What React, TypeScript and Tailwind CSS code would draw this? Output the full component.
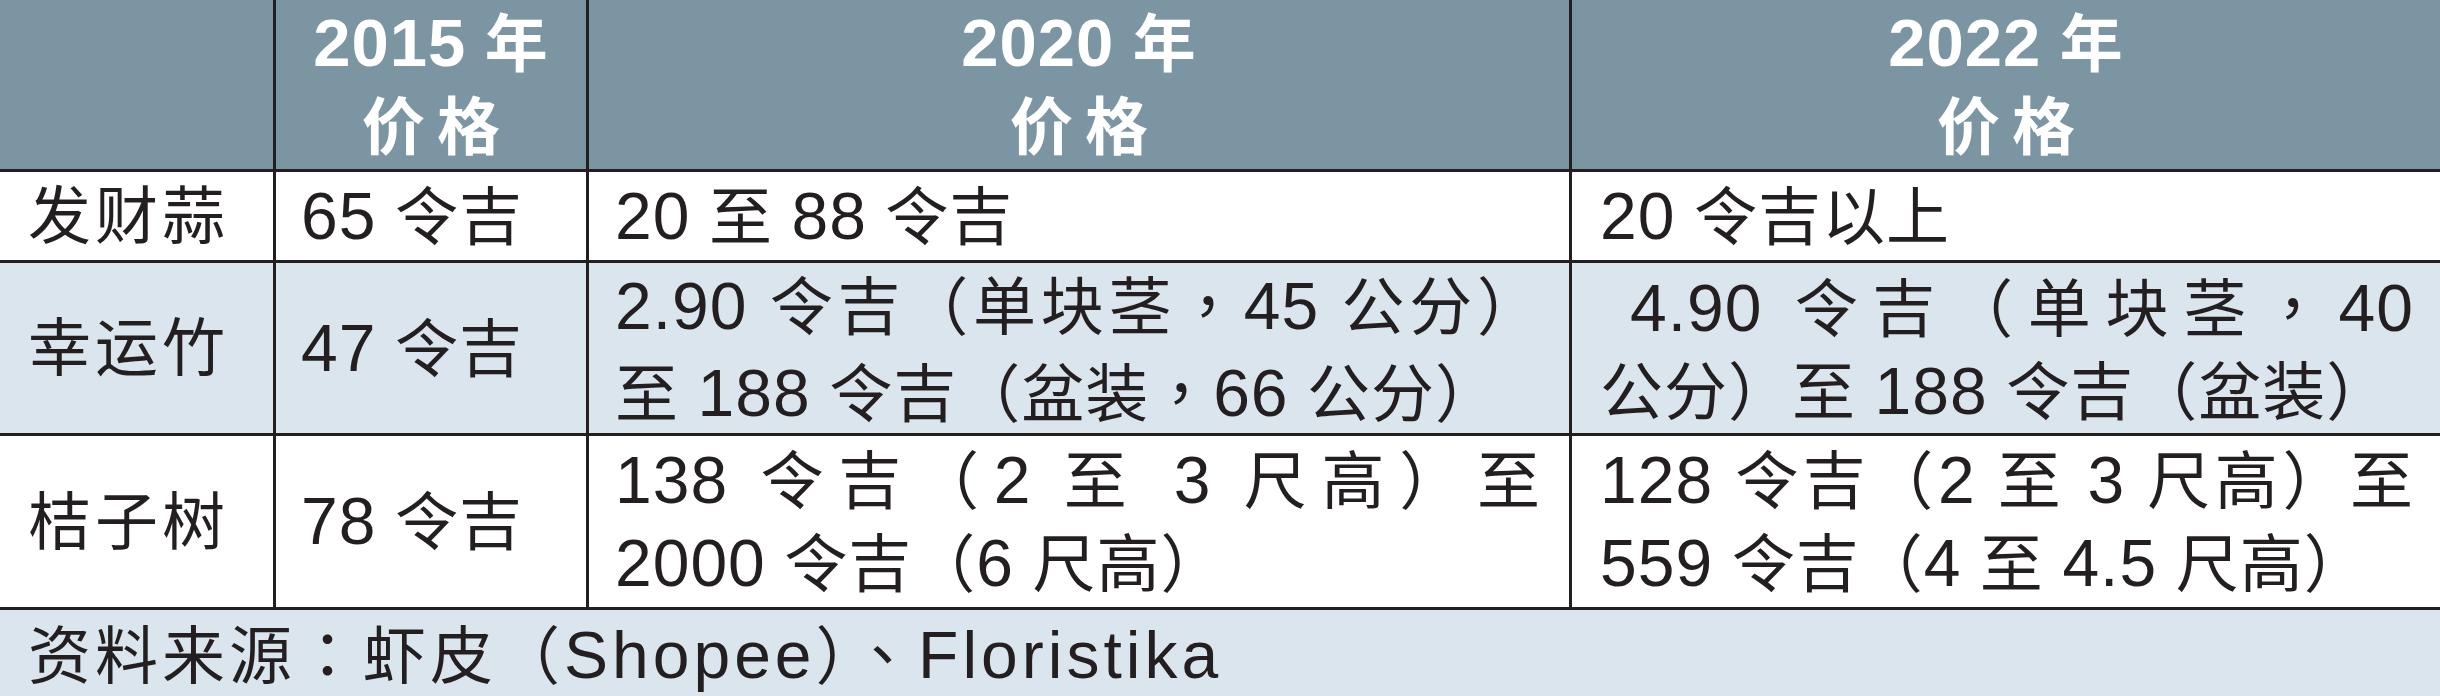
const rows = [
  {
    name: '发财蒜',
    p2015: '65 令吉',
    p2020: [{ text: '20 至 88 令吉' }],
    p2022: [{ text: '20 令吉以上' }],
    bg: 'bg-white',
  },
  {
    name: '幸运竹',
    p2015: '47 令吉',
    p2020: [
      { text: '2.90 令吉（单块茎，45 公分）', justify: true },
      { text: '至 188 令吉（盆装，66 公分）' },
    ],
    p2022: [
      { text: '4.90 令吉（单块茎，40', justify: true, indent: true },
      { text: '公分）至 188 令吉（盆装）' },
    ],
    bg: 'bg-[#dbe5ed]',
  },
  {
    name: '桔子树',
    p2015: '78 令吉',
    p2020: [
      { text: '138 令吉（2 至 3 尺高）至', justify: true },
      { text: '2000 令吉（6 尺高）' },
    ],
    p2022: [
      { text: '128 令吉（2 至 3 尺高）至', justify: true },
      { text: '559 令吉（4 至 4.5 尺高）' },
    ],
    bg: 'bg-white',
  },
];

type Line = { text: string; justify?: boolean; indent?: boolean };

// latin runs are set a little larger than the CJK, centred punctuation uses the TC face
function Runs({ text }: { text: string }) {
  const parts = text.split(/([A-Za-z0-9.]+|[：，、])/).filter((p) => p !== '');
  return (
    <>
      {parts.map((p, i) => {
        if (/^[A-Za-z0-9.]+$/.test(p)) {
          return (
            <span key={i} className="text-[66px]">
              {p}
            </span>
          );
        }
        if (/^[：，、]$/.test(p)) {
          return (
            <span key={i} lang="zh-TW" className="font-['Noto_Sans_CJK_TC',sans-serif]">
              {p}
            </span>
          );
        }
        return <span key={i}>{p}</span>;
      })}
    </>
  );
}

function Lines({ lines }: { lines: Line[] }) {
  return (
    <>
      {lines.map((l, i) => (
        <div
          key={i}
          className={
            l.justify
              ? `text-justify [text-align-last:justify] ${l.indent ? 'pl-[30px]' : ''}`
              : ''
          }
        >
          <Runs text={l.text} />
        </div>
      ))}
    </>
  );
}

function Head({ year }: { year: string }) {
  return (
    <>
      <div>
        <span className="text-[67px]">{year}</span> 年
      </div>
      <div className="tracking-[12px] pl-[12px]">价格</div>
    </>
  );
}

export default function App() {
  const cell = 'flex flex-col justify-center border-[#231f20]';
  const head = `${cell} bg-[#7b95a2] border-b-[3px] text-white font-bold text-[63px] leading-[83px] text-center`;

  return (
    <div
      lang="zh-CN"
      className="w-[2440px] h-[696px] bg-white text-[#231f20] font-['Liberation_Sans','Noto_Sans_CJK_SC',sans-serif] text-[63px] leading-[82px] tracking-[1px]"
    >
      <div className="grid grid-cols-[276px_313px_983px_868px] grid-rows-[172px_91px_173px_174px_86px]">
        <div className={`${head} border-r-[3px]`} />
        <div className={`${head} border-r-[3px]`}>
          <Head year="2015" />
        </div>
        <div className={`${head} border-r-[3px]`}>
          <Head year="2020" />
        </div>
        <div className={head}>
          <Head year="2022" />
        </div>

        {rows.map((r) => (
          <div key={r.name} className="contents">
            <div className={`${cell} ${r.bg} border-b-[3px] border-r-[3px] pl-[28px] tracking-[4px]`}>
              {r.name}
            </div>
            <div className={`${cell} ${r.bg} border-b-[3px] border-r-[3px] pl-[25px]`}>
              <div>
                <Runs text={r.p2015} />
              </div>
            </div>
            <div className={`${cell} ${r.bg} border-b-[3px] border-r-[3px] pl-[26px] pr-[28px]`}>
              <Lines lines={r.p2020} />
            </div>
            <div className={`${cell} ${r.bg} border-b-[3px] pl-[28px] pr-[26px]`}>
              <Lines lines={r.p2022} />
            </div>
          </div>
        ))}

        <div className="col-span-4 flex items-center bg-[#dbe5ed] pl-[28px] tracking-[4px]">
          <div>
            <Runs text="资料来源：虾皮（Shopee）、Floristika" />
          </div>
        </div>
      </div>
    </div>
  );
}
